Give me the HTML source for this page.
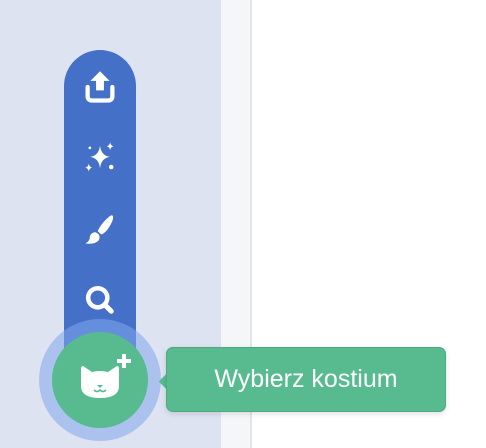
<!DOCTYPE html>
<html><head><style>
body{margin:0;width:486px;height:448px;overflow:hidden;background:#fff;position:relative;font-family:"Liberation Sans",sans-serif}
.left{position:absolute;left:0;top:0;width:221px;height:448px;background:#dde3f0}
.strip{position:absolute;left:221px;top:0;width:29px;height:448px;background:#f5f6f8}
.line{position:absolute;left:250px;top:0;width:2px;height:448px;background:#e3e4e7}
.pill{position:absolute;left:64px;top:50px;width:72px;height:340px;border-radius:36px;background:#4470c8}
.ring{position:absolute;left:39px;top:319px;width:122px;height:122px;border-radius:50%;background:rgba(130,168,238,.55)}
.btn{position:absolute;left:52px;top:332px;width:96px;height:96px;border-radius:50%;background:#57bb8f}
.tip{position:absolute;left:166px;top:347px;width:278px;height:63px;border-radius:7px;background:#57bb8f;border:1px solid #4ca980;color:#fff;font-size:25px;line-height:63px;text-align:center;box-shadow:0 2px 6px rgba(0,0,0,.12)}
.arr{position:absolute;left:161px;top:376px;width:11px;height:11px;background:#57bb8f;transform:rotate(45deg)}
svg{position:absolute}
</style></head><body>
<div class="left"></div><div class="strip"></div><div class="line"></div>
<div class="pill"></div>
<svg style="left:82px;top:69px" width="36" height="36" viewBox="0 0 32 32">
<path d="M16 2 L24.5 10.5 H19.5 V19 H12.5 V10.5 H7.5 Z" fill="#fff"/>
<path d="M5 16 V24 Q5 28 9 28 H23 Q27 28 27 24 V16" fill="none" stroke="#fff" stroke-width="3.8" stroke-linecap="round"/>
</svg>
<svg style="left:82px;top:140px" width="36" height="36" viewBox="0 0 32 32" fill="#fff">
<path d="M16 5 Q17 14 25 15 Q17 16 16 25 Q15 16 7 15 Q15 14 16 5Z"/>
<path d="M25 2 Q25.5 5 28 5.5 Q25.5 6 25 9 Q24.5 6 22 5.5 Q24.5 5 25 2Z"/>
<path d="M6 21 Q6.5 24 9 24.5 Q6.5 25 6 28 Q5.5 25 3 24.5 Q5.5 24 6 21Z"/>
<circle cx="26" cy="24" r="2"/><circle cx="7" cy="7" r="1.2"/>
</svg>
<svg style="left:82px;top:212px" width="36" height="36" viewBox="0 0 32 32" fill="#fff">
<path d="M27 3 Q29 5 25 12 Q21 19 17 20 L14 17 Q16 12 21 7 Q26 2 27 3Z"/>
<path d="M12 18 Q17 20 15 25 Q12 29 3 28 Q7 26 7 22 Q8 18 12 18Z"/>
</svg>
<svg style="left:82px;top:282px" width="36" height="36" viewBox="0 0 32 32">
<circle cx="14" cy="14" r="8.5" fill="none" stroke="#fff" stroke-width="4"/>
<path d="M20 20 L26 26" stroke="#fff" stroke-width="4.5" stroke-linecap="round"/>
</svg>
<div class="ring"></div>
<div class="btn"></div>
<svg style="left:0;top:0" width="160" height="448" viewBox="0 0 160 448" fill="#fff">
<path d="M83 366 L92 372 Q100 370 108 372 L117 366 Q119 366 119 369 V386 Q119 398 100 398 Q81 398 81 386 V369 Q81 366 83 366Z"/>
<path d="M122 354 h4 v5 h5 v4 h-5 v5 h-4 v-5 h-5 v-4 h5z"/>
<path d="M97 385 h6 l-3 3z" fill="#57bb8f"/>
<path d="M94 390 Q97 393 100 390 Q103 393 106 390" fill="none" stroke="#57bb8f" stroke-width="1.6"/>
</svg>
<div class="arr"></div>
<div class="tip">Wybierz kostium</div>
</body></html>
